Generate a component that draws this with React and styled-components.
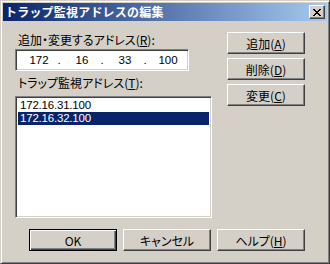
import styled, { createGlobalStyle } from "styled-components";

const GlobalStyle = createGlobalStyle`
  html, body {
    margin: 0;
    padding: 0;
    background: #d4d0c8;
  }
  body {
    font-family: "Noto Sans CJK JP", "DejaVu Sans", sans-serif;
    font-size: 12px;
    color: #000;
  }
`;

const Window = styled.div`
  box-sizing: border-box;
  width: 330px;
  height: 264px;
  padding: 2px;
  background: #d4d0c8;
  border: 1px solid;
  border-color: #d4d0c8 #404040 #404040 #d4d0c8;
  box-shadow: inset 1px 1px #ffffff, inset -1px -1px #808080;
  display: flex;
  flex-direction: column;
`;

const TitleBar = styled.div`
  height: 18px;
  display: flex;
  align-items: center;
  justify-content: space-between;
  padding: 0 2px 0 2px;
  background: linear-gradient(to right, #0a246a, #a6caf0);
`;

const Title = styled.span`
  color: #fff;
  font-weight: bold;
  font-size: 12px;
  line-height: 18px;
  letter-spacing: 0.2px;
`;

const CloseButton = styled.div`
  box-sizing: border-box;
  width: 16px;
  height: 14px;
  background: #d4d0c8;
  border: 1px solid;
  border-color: #ffffff #404040 #404040 #ffffff;
  box-shadow: inset -1px -1px #808080;
  display: flex;
  align-items: center;
  justify-content: center;
`;

const Body = styled.div`
  flex: 1;
  display: flex;
  flex-direction: column;
  padding: 11px 22px 10px 12px;
`;

const Main = styled.div`
  display: flex;
  gap: 15px;
`;

const LeftColumn = styled.div`
  width: 197px;
  display: flex;
  flex-direction: column;
`;

const RightColumn = styled.div`
  width: 78px;
  display: flex;
  flex-direction: column;
  gap: 4px;
`;

const Label = styled.div`
  height: 16px;
  line-height: 16px;
  white-space: nowrap;
  font-feature-settings: "palt";
  padding-left: 3px;
  margin-top: ${(p) => p.$top || 0}px;
  margin-bottom: ${(p) => p.$bottom || 0}px;
`;

const Sunken = styled.div`
  box-sizing: border-box;
  background: #fff;
  border: 1px solid;
  border-color: #808080 #ffffff #ffffff #808080;
  box-shadow: inset 1px 1px #404040, inset -1px -1px #d4d0c8;
  padding: 2px;
`;

const IpField = styled(Sunken)`
  width: 174px;
  height: 22px;
  display: grid;
  grid-template-columns: 1fr 4px 1fr 4px 1fr 4px 1fr;
  align-items: center;
  font-family: "Liberation Sans", sans-serif;
  font-size: 11.5px;
`;

const Octet = styled.span`
  text-align: center;
  padding-left: 3px;
`;

const Dot = styled.span`
  text-align: center;
`;

const ListBox = styled(Sunken)`
  height: 122px;
  font-family: "Liberation Sans", sans-serif;
  font-size: 11.5px;
`;

const ListItem = styled.div`
  height: 13px;
  line-height: 13px;
  padding-left: 2px;
  letter-spacing: -0.2px;
  background: ${(p) => (p.$selected ? "#0a246a" : "transparent")};
  color: ${(p) => (p.$selected ? "#fff" : "#000")};
`;

const Button = styled.div`
  box-sizing: border-box;
  width: ${(p) => p.$width}px;
  height: 22px;
  display: flex;
  align-items: center;
  justify-content: center;
  background: #d4d0c8;
  border: 1px solid;
  border-color: ${(p) =>
    p.$default ? "#000" : "#ffffff #404040 #404040 #ffffff"};
  box-shadow: ${(p) =>
    p.$default
      ? "inset 1px 1px #ffffff, inset -1px -1px #404040, inset -2px -2px #808080"
      : "inset -1px -1px #808080"};
  font-feature-settings: "palt";
  white-space: nowrap;
`;

const ButtonRow = styled.div`
  display: flex;
  justify-content: flex-end;
  gap: 6px;
  margin-top: 11px;
`;

const rightButtons = [
  { label: "追加", key: "A" },
  { label: "削除", key: "D" },
  { label: "変更", key: "C" },
];

const addresses = ["172.16.31.100", "172.16.32.100"];

export default function App() {
  return (
    <>
      <GlobalStyle />
      <Window>
        <TitleBar>
          <Title>トラップ監視アドレスの編集</Title>
          <CloseButton>
            <svg width="8" height="7" viewBox="0 0 8 7">
              <path
                d="M0 0h2v1h1v1h2V1h1V0h2v1H7v1H6v1H5v1h1v1h1v1h1v1H6V6H5V5H3v1H2v1H0V6h1V5h1V4h1V3H2V2H1V1H0z"
                fill="#000"
              />
            </svg>
          </CloseButton>
        </TitleBar>
        <Body>
          <Main>
            <LeftColumn>
              <Label $bottom={1}>
                追加・変更するアドレス(<u>R</u>):
              </Label>
              <IpField>
                <Octet>172</Octet>
                <Dot>.</Dot>
                <Octet>16</Octet>
                <Dot>.</Dot>
                <Octet>33</Octet>
                <Dot>.</Dot>
                <Octet>100</Octet>
              </IpField>
              <Label $top={4} $bottom={5}>
                トラップ監視アドレス(<u>T</u>):
              </Label>
              <ListBox>
                {addresses.map((a, i) => (
                  <ListItem key={a} $selected={i === 1}>
                    {a}
                  </ListItem>
                ))}
              </ListBox>
            </LeftColumn>
            <RightColumn>
              {rightButtons.map((b) => (
                <Button key={b.key} $width={78}>
                  {b.label}(<u>{b.key}</u>)
                </Button>
              ))}
            </RightColumn>
          </Main>
          <ButtonRow>
            <Button $width={88} $default>
              OK
            </Button>
            <Button $width={88}>キャンセル</Button>
            <Button $width={88}>
              ヘルプ(<u>H</u>)
            </Button>
          </ButtonRow>
        </Body>
      </Window>
    </>
  );
}
